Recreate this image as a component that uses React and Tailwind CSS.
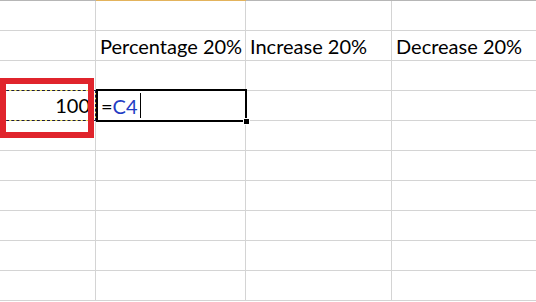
import React from 'react'

const rows = Array.from({ length: 10 })
const font = { fontFamily: 'Lato, "Open Sans", sans-serif' }

function Cell({ w, last, children, className = '' }) {
  return (
    <div className={`h-full shrink-0 box-border ${last ? 'flex-1' : 'border-r border-[#d4d4d4]'} ${w} ${className}`}>
      {children}
    </div>
  )
}

export default function App() {
  return (
    <div className="relative w-[536px] h-[302px] overflow-hidden bg-white text-[20px] leading-none text-black" style={font}>
      {/* header edge */}
      <div className="flex h-px">
        <div className="w-[96px] bg-[#b6b6b6]" />
        <div className="w-[150px] bg-[#e3b35c]" />
        <div className="flex-1 bg-[#b6b6b6]" />
      </div>

      {rows.map((_, i) => (
        <div key={i} className="flex h-[30px] border-b border-[#d4d4d4] box-border">
          <Cell w="w-[96px]" />
          <Cell w="w-[150px]" className="flex items-center pl-[4px]">
            {i === 1 && <span>Percentage 20%</span>}
          </Cell>
          <Cell w="w-[146px]" className="flex items-center pl-[4px]">
            {i === 1 && <span>Increase 20%</span>}
          </Cell>
          <Cell last className="flex items-center pl-[4px]">
            {i === 1 && <span>Decrease 20%</span>}
          </Cell>
        </div>
      ))}

      {/* copied cell A4: marching ants */}
      <div className="absolute left-[-4px] top-[90px] w-[100px] h-[31px] border-[1.5px] border-[#f2e35a] box-border" />
      <div className="absolute left-[-4px] top-[90px] w-[100px] h-[31px] border-[1.5px] border-dashed border-[#1b1b40] box-border" />
      <div className="absolute left-0 top-[92px] w-[90px] h-[27px] flex items-center justify-end pb-[1px] bg-white">
        <span>100</span>
      </div>

      {/* active cell B4 with formula */}
      <div className="absolute left-[96px] top-[89px] w-[151px] h-[33px] border-2 border-black box-border flex items-center pl-[3px]">
        <span>=</span>
        <span className="text-[#1f3cc4]">C4</span>
        <span className="ml-[2px] w-px h-[25px] bg-black" />
      </div>
      <div className="absolute left-[243px] top-[118px] w-[5px] h-[5px] bg-black border border-white box-content" />

      {/* red highlight */}
      <div className="absolute left-0 top-[78px] w-[94px] h-[60px] border-[6px] border-[#e0242c] box-border" />
    </div>
  )
}
